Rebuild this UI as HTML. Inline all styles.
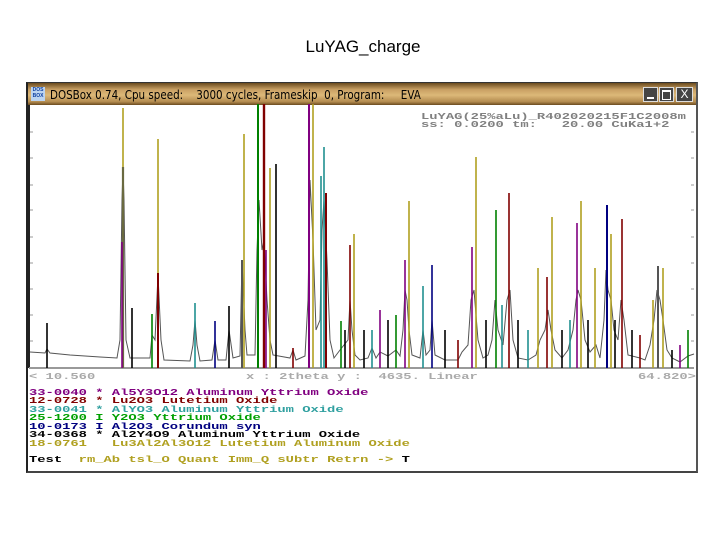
<!DOCTYPE html>
<html><head><meta charset="utf-8"><style>
body{margin:0;width:720px;height:540px;background:#fff;position:relative;overflow:hidden;font-family:"Liberation Sans",sans-serif}
.t{position:absolute;left:0;width:726px;top:37px;text-align:center;font-size:17px;color:#000}
.win{position:absolute;left:26px;top:82px;width:672px;height:391px;background:#fff;border:1px solid #333;box-sizing:border-box;border-left:2px solid #222;border-right:2px solid #555;border-bottom:2px solid #444}
.tb{position:absolute;left:0;top:0;right:0;height:22px;background:linear-gradient(#6a4a1e,#c9a064 30%,#dcb878 55%,#b48c50 85%,#6a4a1e)}
.tb span{position:absolute;top:4px;font-size:12.5px;color:#000;font-family:"DejaVu Sans Condensed","Liberation Sans",sans-serif;white-space:pre;transform:scaleX(.92);transform-origin:left}
.ic{position:absolute;left:3px;top:4px;width:14px;height:14px;background:#bcd4f0;font-size:5px;line-height:6px;color:#1040a0;font-weight:bold;text-align:center}
.btn{position:absolute;top:4px;width:15px;height:15px;background:#444;border:1px solid #ddd;box-sizing:border-box;color:#fff;font-size:12px;line-height:13px;text-align:center}
.m{position:absolute;font-family:"Liberation Mono",monospace;font-weight:bold;font-size:13.8px;white-space:pre;transform:scaleY(.66);transform-origin:left top;line-height:14px}
</style></head><body>
<div class="t">LuYAG_charge</div>
<div class="win">
<div class="tb"><div class="ic">DOS<br>BOX</div><span style="left:22px">DOSBox 0.74, Cpu speed:    3000 cycles, Frameskip  0, Program:     EVA</span>
<div class="btn" style="left:615px"><div style="position:absolute;left:3px;top:9px;width:7px;height:2px;background:#fff"></div></div>
<div class="btn" style="left:631px"><div style="position:absolute;left:2px;top:2px;width:7px;height:7px;border:1px solid #fff;border-top-width:2px"></div></div>
<div class="btn" style="left:648px;width:17px">X</div></div>
</div>
<svg style="position:absolute;left:0;top:0" width="720" height="540">
<g stroke="#444" stroke-width="1">
<line x1="29" y1="105" x2="29" y2="368" stroke="#222" stroke-width="2"/>
<line x1="29" y1="368" x2="694" y2="368" stroke="#999" stroke-width="2"/>
<g stroke="#999"><line x1="30" y1="132" x2="33" y2="132"/><line x1="30" y1="158" x2="33" y2="158"/><line x1="30" y1="185" x2="33" y2="185"/><line x1="30" y1="210" x2="33" y2="210"/><line x1="30" y1="237" x2="33" y2="237"/><line x1="30" y1="263" x2="33" y2="263"/><line x1="30" y1="289" x2="33" y2="289"/><line x1="30" y1="315" x2="33" y2="315"/><line x1="30" y1="341" x2="33" y2="341"/>
<line x1="691" y1="132" x2="694" y2="132"/><line x1="691" y1="158" x2="694" y2="158"/><line x1="691" y1="185" x2="694" y2="185"/><line x1="691" y1="210" x2="694" y2="210"/><line x1="691" y1="237" x2="694" y2="237"/><line x1="691" y1="263" x2="694" y2="263"/><line x1="691" y1="289" x2="694" y2="289"/><line x1="691" y1="315" x2="694" y2="315"/><line x1="691" y1="341" x2="694" y2="341"/></g>
</g>
<polyline fill="none" stroke="#555" stroke-width="1" points="30,352 45,353 47,349 50,353 70,355 100,357 117,358 120,340 122,200 123,168 124,200 126,340 130,358 150,358 152,335 155,340 158,275 161,340 164,360 190,361 193,345 195,320 197,345 200,361 212,360 215,340 218,360 226,360 229,330 233,358 240,356 242,260 245,330 247,355 255,355 257,250 259,200 262,250 264,240 267,300 270,340 273,355 290,358 293,350 296,360 305,356 308,300 310,180 313,240 316,330 320,320 322,230 324,200 327,260 330,340 334,358 340,350 344,345 348,340 350,300 352,330 355,355 360,360 368,358 372,348 376,358 380,352 388,356 396,350 400,356 403,330 405,290 407,300 409,330 412,355 420,358 423,330 426,355 430,350 432,320 435,355 445,360 458,360 462,352 468,345 471,300 474,290 478,340 483,358 488,355 492,340 495,300 498,330 503,345 507,300 510,290 513,340 518,358 528,360 536,355 540,340 545,330 548,310 551,330 555,350 562,358 568,350 573,330 576,300 578,290 581,300 585,340 590,352 596,345 600,358 604,320 606,270 608,290 611,300 614,330 618,340 621,300 624,320 628,355 640,358 645,360 650,345 654,320 657,290 660,300 663,320 667,350 672,358 680,362 688,356 694,354"/>
<g stroke-width="1.6" fill="none">
<line x1="47" y1="368" x2="47" y2="323" stroke="#000"/>
<line x1="123" y1="368" x2="123" y2="108" stroke="#b0a020"/>
<line x1="123" y1="368" x2="123" y2="167" stroke="#6a6a40" stroke-width="2.2"/>
<line x1="122" y1="368" x2="122" y2="242" stroke="#800080"/>
<line x1="132" y1="368" x2="132" y2="308" stroke="#000"/>
<line x1="152" y1="368" x2="152" y2="314" stroke="#008000"/>
<line x1="158" y1="368" x2="158" y2="139" stroke="#b0a020"/>
<line x1="158" y1="368" x2="158" y2="273" stroke="#800000" stroke-width="2"/>
<line x1="195" y1="368" x2="195" y2="303" stroke="#209090"/>
<line x1="215" y1="368" x2="215" y2="321" stroke="#000080"/>
<line x1="229" y1="368" x2="229" y2="306" stroke="#000"/>
<line x1="244" y1="368" x2="244" y2="134" stroke="#b0a020"/>
<line x1="242" y1="368" x2="242" y2="260" stroke="#555" stroke-width="2"/>
<line x1="258" y1="368" x2="258" y2="104" stroke="#008000" stroke-width="2"/>
<line x1="264" y1="368" x2="264" y2="104" stroke="#800000" stroke-width="2.4"/>
<line x1="266" y1="368" x2="266" y2="250" stroke="#800080"/>
<line x1="270" y1="368" x2="270" y2="168" stroke="#b0a020"/>
<line x1="276" y1="368" x2="276" y2="164" stroke="#000"/>
<line x1="293" y1="368" x2="293" y2="348" stroke="#800000"/>
<line x1="309" y1="368" x2="309" y2="104" stroke="#800080" stroke-width="2"/>
<line x1="313" y1="368" x2="313" y2="104" stroke="#b0a020"/>
<line x1="321" y1="368" x2="321" y2="176" stroke="#209090"/>
<line x1="324" y1="368" x2="324" y2="147" stroke="#209090"/>
<line x1="326" y1="368" x2="326" y2="193" stroke="#800000" stroke-width="2"/>
<line x1="341" y1="368" x2="341" y2="321" stroke="#008000"/>
<line x1="345" y1="368" x2="345" y2="330" stroke="#000"/>
<line x1="350" y1="368" x2="350" y2="245" stroke="#800000"/>
<line x1="354" y1="368" x2="354" y2="234" stroke="#b0a020"/>
<line x1="364" y1="368" x2="364" y2="330" stroke="#000"/>
<line x1="372" y1="368" x2="372" y2="330" stroke="#209090"/>
<line x1="380" y1="368" x2="380" y2="310" stroke="#800080"/>
<line x1="388" y1="368" x2="388" y2="320" stroke="#000"/>
<line x1="396" y1="368" x2="396" y2="315" stroke="#008000"/>
<line x1="405" y1="368" x2="405" y2="260" stroke="#800080"/>
<line x1="409" y1="368" x2="409" y2="201" stroke="#b0a020"/>
<line x1="423" y1="368" x2="423" y2="286" stroke="#209090"/>
<line x1="432" y1="368" x2="432" y2="265" stroke="#000080"/>
<line x1="445" y1="368" x2="445" y2="330" stroke="#000"/>
<line x1="458" y1="368" x2="458" y2="340" stroke="#800000"/>
<line x1="472" y1="368" x2="472" y2="247" stroke="#800080"/>
<line x1="476" y1="368" x2="476" y2="157" stroke="#b0a020"/>
<line x1="486" y1="368" x2="486" y2="320" stroke="#000"/>
<line x1="496" y1="368" x2="496" y2="210" stroke="#008000"/>
<line x1="502" y1="368" x2="502" y2="305" stroke="#209090"/>
<line x1="509" y1="368" x2="509" y2="193" stroke="#800000"/>
<line x1="518" y1="368" x2="518" y2="320" stroke="#000"/>
<line x1="528" y1="368" x2="528" y2="330" stroke="#209090"/>
<line x1="538" y1="368" x2="538" y2="268" stroke="#b0a020"/>
<line x1="547" y1="368" x2="547" y2="277" stroke="#800000"/>
<line x1="552" y1="368" x2="552" y2="217" stroke="#b0a020"/>
<line x1="562" y1="368" x2="562" y2="330" stroke="#000"/>
<line x1="570" y1="368" x2="570" y2="320" stroke="#209090"/>
<line x1="577" y1="368" x2="577" y2="223" stroke="#800080"/>
<line x1="581" y1="368" x2="581" y2="201" stroke="#b0a020"/>
<line x1="588" y1="368" x2="588" y2="320" stroke="#000"/>
<line x1="595" y1="368" x2="595" y2="268" stroke="#b0a020"/>
<line x1="607" y1="368" x2="607" y2="205" stroke="#000080" stroke-width="2"/>
<line x1="611" y1="368" x2="611" y2="234" stroke="#b0a020"/>
<line x1="615" y1="368" x2="615" y2="320" stroke="#000"/>
<line x1="622" y1="368" x2="622" y2="219" stroke="#800000"/>
<line x1="632" y1="368" x2="632" y2="330" stroke="#000"/>
<line x1="640" y1="368" x2="640" y2="335" stroke="#800000"/>
<line x1="653" y1="368" x2="653" y2="300" stroke="#b0a020"/>
<line x1="658" y1="368" x2="658" y2="266" stroke="#555" stroke-width="2"/>
<line x1="663" y1="368" x2="663" y2="268" stroke="#b0a020"/>
<line x1="672" y1="368" x2="672" y2="350" stroke="#000"/>
<line x1="680" y1="368" x2="680" y2="345" stroke="#800080"/>
<line x1="688" y1="368" x2="688" y2="330" stroke="#008000"/>
</g>
</svg>
<div class="m" style="left:421px;top:113px;color:#808080">LuYAG(25%aLu)_R402020215F1C2008m</div>
<div class="m" style="left:421px;top:121px;color:#808080">ss: 0.0200 tm:   20.00 CuKa1+2</div>
<div class="m" style="left:29px;top:373px;color:#aaa">&lt; 10.560</div>
<div class="m" style="left:246px;top:373px;color:#aaa">x : 2theta y :  4635. Linear</div>
<div class="m" style="left:638px;top:373px;color:#aaa">64.820&gt;</div>
<div class="m" style="left:29px;top:389px;color:#800080">33-0040 * Al5Y3O12 Aluminum Yttrium Oxide</div>
<div class="m" style="left:29px;top:397px;color:#800000">12-0728 * Lu2O3 Lutetium Oxide</div>
<div class="m" style="left:29px;top:406px;color:#30a0a0">33-0041 * AlYO3 Aluminum Yttrium Oxide</div>
<div class="m" style="left:29px;top:414px;color:#00a000">25-1200 I Y2O3 Yttrium Oxide</div>
<div class="m" style="left:29px;top:423px;color:#000080">10-0173 I Al2O3 Corundum syn</div>
<div class="m" style="left:29px;top:431px;color:#000">34-0368 * Al2Y4O9 Aluminum Yttrium Oxide</div>
<div class="m" style="left:29px;top:440px;color:#b0a020">18-0761   Lu3Al2Al3O12 Lutetium Aluminum Oxide</div>
<div class="m" style="left:29px;top:456px;color:#b0a020"><span style="color:#000">Test</span>  rm_Ab tsl_O Quant Imm_Q sUbtr Retrn -&gt; <span style="color:#000">T</span></div>
</body></html>
